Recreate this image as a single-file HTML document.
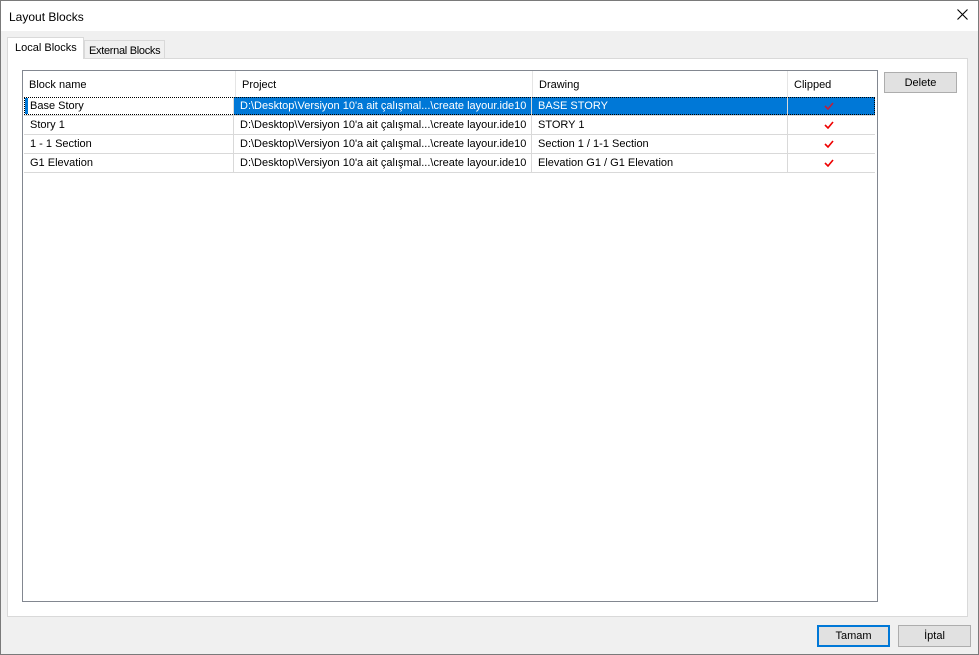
<!DOCTYPE html><html><head><style>
*{margin:0;padding:0;box-sizing:border-box}
body{width:979px;height:655px;position:relative;font-family:"Liberation Sans",sans-serif;font-size:11px;color:#000;background:#f0f0f0;overflow:hidden}
.a{position:absolute;white-space:nowrap}
.win{left:0;top:0;width:979px;height:655px;border:1px solid #7a7a7a}
.title{left:1px;top:1px;width:977px;height:30px;background:#fff}
.btn{background:#e1e1e1;border:1px solid #adadad;text-align:center;line-height:20px}
.cell{position:absolute;white-space:nowrap;overflow:hidden;line-height:19px;height:18px;padding-left:6px;border-right:1px solid #d9d9d9}
.row{position:absolute;left:24px;width:851px;height:19px;border-bottom:1px solid #d9d9d9}
.ck{position:absolute;left:800px;top:5px}
</style></head><body>
<div class="a win"></div>
<div class="a title"></div>
<div class="a" style="left:9px;top:10px;font-size:12px">Layout Blocks</div>
<svg class="a" style="left:957px;top:9px" width="11" height="11" viewBox="0 0 11 11"><path d="M0.5 0.5l10 10M10.5 0.5l-10 10" stroke="#000" stroke-width="1.1"/></svg>
<div class="a" style="left:7px;top:58px;width:961px;height:559px;background:#fff;border:1px solid #d9d9d9"></div>
<div class="a" style="left:84px;top:40px;width:81px;height:19px;background:#f0f0f0;border:1px solid #d9d9d9;padding:4px 0 0 4px;font-size:11px;letter-spacing:-0.3px">External Blocks</div>
<div class="a" style="left:7px;top:37px;width:77px;height:22px;background:#fff;border:1px solid #d9d9d9;border-bottom:none;padding:4px 0 0 7px;font-size:11px">Local Blocks</div>
<div class="a" style="left:22px;top:70px;width:856px;height:532px;border:1px solid #828790;background:#fff"></div>
<div class="a" style="left:23px;top:71px;width:853px;height:26px">
 <div class="cell" style="left:0;width:213px;top:5px;border:none">Block name</div>
 <div class="cell" style="left:213px;width:297px;top:5px;border:none">Project</div>
 <div class="cell" style="left:510px;width:255px;top:5px;border:none">Drawing</div>
 <div class="cell" style="left:765px;width:88px;top:5px;border:none">Clipped</div>
 <div class="a" style="left:212px;top:0;height:26px;border-left:1px solid #e5e5e5"></div>
 <div class="a" style="left:509px;top:0;height:26px;border-left:1px solid #e5e5e5"></div>
 <div class="a" style="left:764px;top:0;height:26px;border-left:1px solid #e5e5e5"></div>
</div>
<div class="row" style="top:97px">
 <div class="a" style="left:210px;top:0;width:641px;height:18px;background:#0078d7"></div>
 <div class="a" style="left:0;top:0;width:851px;height:18px;border:1px dotted #000"></div>
 <div class="a" style="left:1px;top:1px;width:3px;height:16px;background:#0078d7"></div>
 <div class="cell" style="left:0;width:210px">Base Story</div>
 <div class="cell" style="left:210px;width:298px;color:#fff">D:\Desktop\Versiyon 10'a ait çalışmal...\create layour.ide10</div>
 <div class="cell" style="left:508px;width:256px;color:#fff">BASE STORY</div>
 <svg class="ck" width="10" height="8" viewBox="0 0 10 8"><path d="M1 4l3 3 5-6" stroke="#c0203a" stroke-width="1.6" fill="none"/></svg>
</div>
<div class="row" style="top:116px"><div class="cell" style="left:0;width:210px">Story 1</div><div class="cell" style="left:210px;width:298px">D:\Desktop\Versiyon 10'a ait çalışmal...\create layour.ide10</div><div class="cell" style="left:508px;width:256px">STORY 1</div><svg class="ck" width="10" height="8" viewBox="0 0 10 8"><path d="M1 4l3 3 5-6" stroke="#e00" stroke-width="1.6" fill="none"/></svg></div>
<div class="row" style="top:135px"><div class="cell" style="left:0;width:210px">1 - 1 Section</div><div class="cell" style="left:210px;width:298px">D:\Desktop\Versiyon 10'a ait çalışmal...\create layour.ide10</div><div class="cell" style="left:508px;width:256px">Section 1 / 1-1 Section</div><svg class="ck" width="10" height="8" viewBox="0 0 10 8"><path d="M1 4l3 3 5-6" stroke="#e00" stroke-width="1.6" fill="none"/></svg></div>
<div class="row" style="top:154px"><div class="cell" style="left:0;width:210px">G1 Elevation</div><div class="cell" style="left:210px;width:298px">D:\Desktop\Versiyon 10'a ait çalışmal...\create layour.ide10</div><div class="cell" style="left:508px;width:256px">Elevation G1 / G1 Elevation</div><svg class="ck" width="10" height="8" viewBox="0 0 10 8"><path d="M1 4l3 3 5-6" stroke="#e00" stroke-width="1.6" fill="none"/></svg></div>
<div class="a btn" style="left:884px;top:72px;width:73px;height:21px">Delete</div>
<div class="a btn" style="left:817px;top:625px;width:73px;height:22px;border:2px solid #0078d7;line-height:19px">Tamam</div>
<div class="a btn" style="left:898px;top:625px;width:73px;height:22px">İptal</div>
</body></html>
